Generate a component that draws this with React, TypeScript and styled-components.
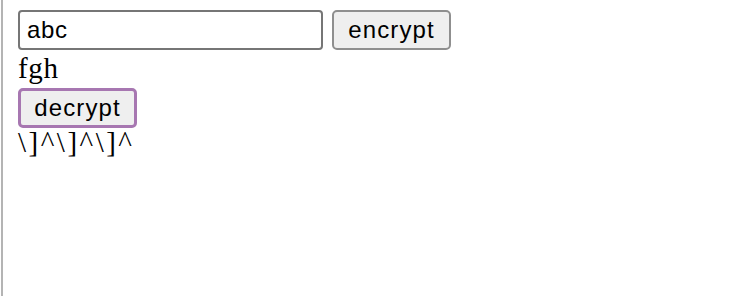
import styled, { createGlobalStyle } from 'styled-components'

const GlobalStyle = createGlobalStyle`
  html, body {
    margin: 0;
    padding: 0;
    background: #fff;
  }
`

const Frame = styled.div`
  margin-left: 1px;
  height: 296px;
  border-left: 2px solid #b4b4b4;
  padding: 10px 0 0 15px;
  box-sizing: border-box;
  font-family: 'Liberation Serif', 'Times New Roman', serif;
  color: #000;
`

const Row = styled.div`
  display: flex;
  gap: 9px;
  height: 40px;
`

const TextInput = styled.input`
  width: 305px;
  height: 40px;
  box-sizing: border-box;
  border: 2px solid #767676;
  border-radius: 4px;
  padding: 0 7px;
  font-family: 'Liberation Sans', Arial, sans-serif;
  font-size: 24px;
  letter-spacing: 0.6px;
  color: #000;
  outline: none;
`

const Button = styled.button<{ $focused?: boolean }>`
  width: 119px;
  height: 40px;
  box-sizing: border-box;
  border: ${(p) => (p.$focused ? '3px solid #a777b1' : '2px solid #8f8f8f')};
  border-radius: 5px;
  background-color: #efefef;
  font-family: 'Liberation Sans', Arial, sans-serif;
  font-size: 24px;
  letter-spacing: 1.1px;
  color: #000;
  padding: 0;
  cursor: pointer;
`

const Output = styled.div<{ $spacing: number; $height: number; $after?: number }>`
  font-size: 29px;
  line-height: ${(p) => p.$height}px;
  letter-spacing: ${(p) => p.$spacing}px;
  margin-bottom: ${(p) => p.$after ?? 0}px;
`

const App = () => (
  <>
    <GlobalStyle />
    <Frame>
      <Row>
        <TextInput defaultValue="abc" />
        <Button>encrypt</Button>
      </Row>
      <Output $spacing={0.7} $height={36} $after={2}>fgh</Output>
      <Button $focused>decrypt</Button>
      <Output $spacing={2.5} $height={29}>{'\\]^\\]^\\]^'}</Output>
    </Frame>
  </>
)

export default App
